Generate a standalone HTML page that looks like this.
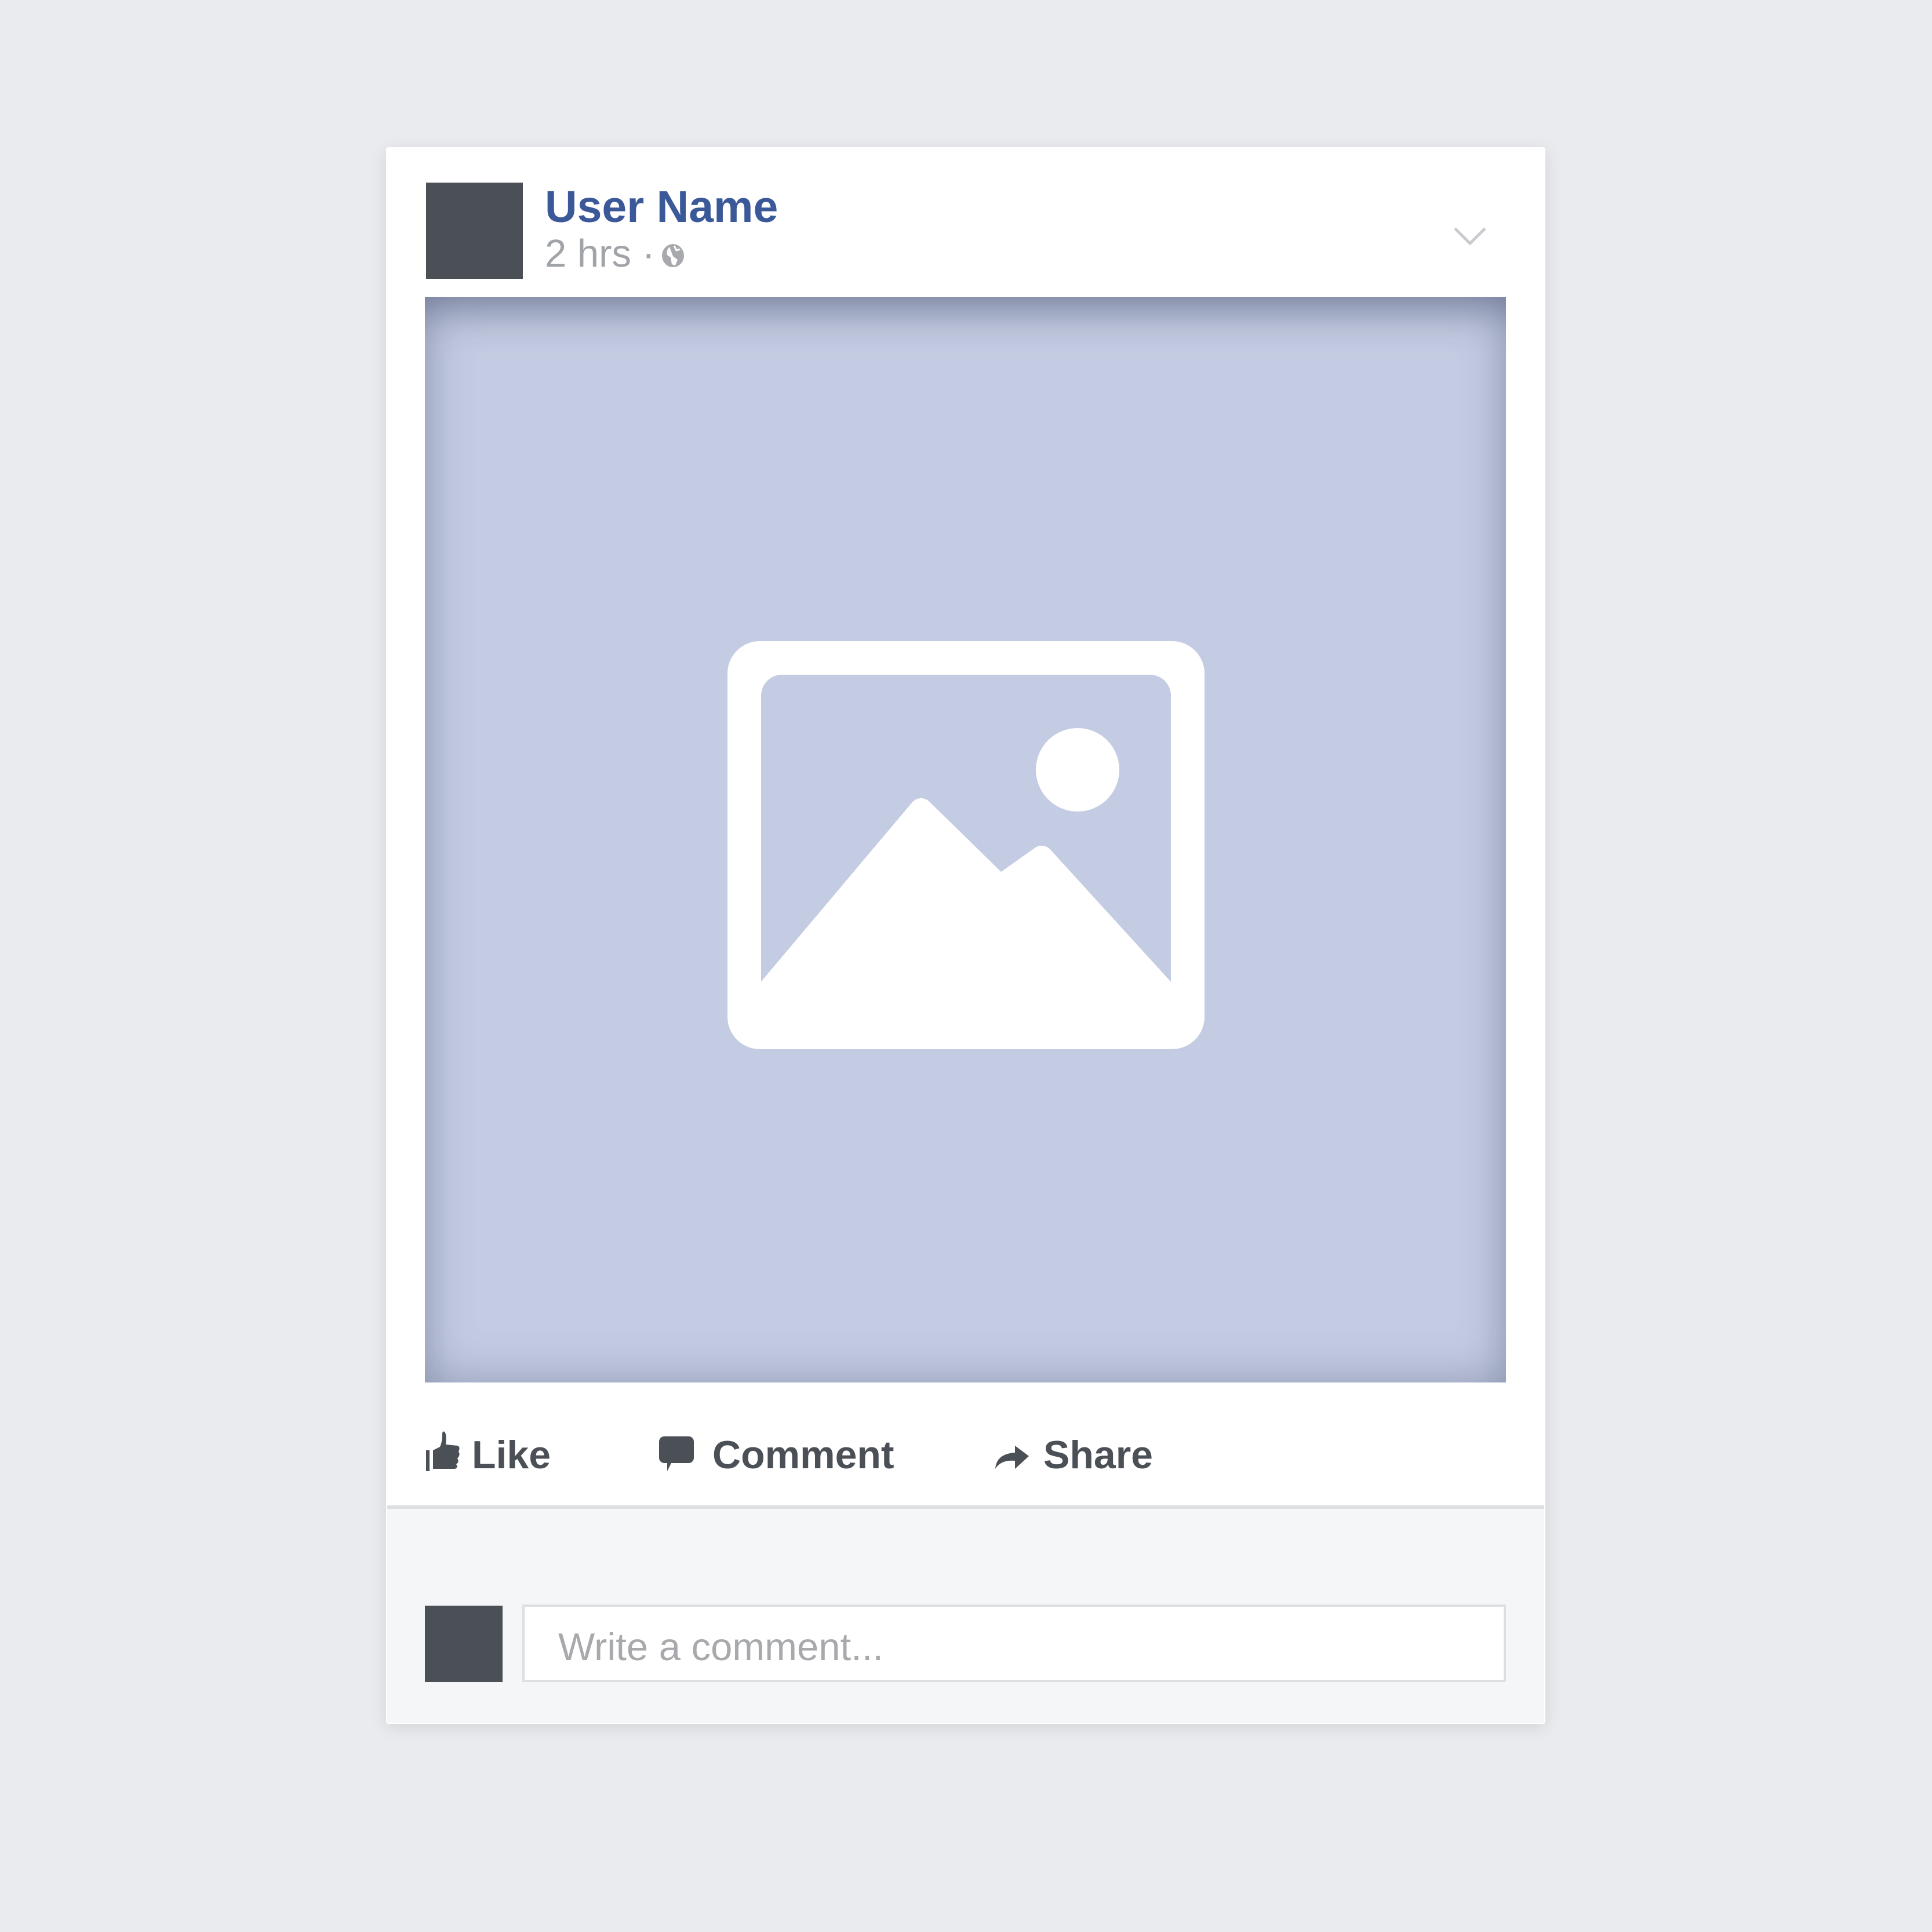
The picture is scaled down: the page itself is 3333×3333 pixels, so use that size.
<!DOCTYPE html>
<html><head><meta charset="utf-8"><style>
*{margin:0;padding:0;box-sizing:border-box}
body{width:3333px;height:3333px;background:#e9ebee;position:relative;overflow:hidden;font-family:"Liberation Sans",Arial,sans-serif}
.card{position:absolute;left:666px;top:254px;width:2000px;height:2720px;background:#fff;border-radius:4px;box-shadow:0 6px 30px rgba(0,0,0,0.10)}
.abs{position:absolute}
.img{position:absolute;left:733px;top:512px;width:1865px;height:1873px;background:#c4cce3;box-shadow:inset 0 60px 70px -40px rgba(70,80,110,0.45),inset 0 0 80px rgba(70,80,110,0.42);overflow:hidden}
.act{position:absolute;top:2470px;font-size:68px;font-weight:bold;color:#4b4f56;line-height:80px}
</style></head><body>
<div class="card"></div>
<div class="abs" style="left:735px;top:315px;width:167px;height:166px;background:#4b4f56"></div>
<div class="abs" style="left:940px;top:307px;font-size:77px;font-weight:bold;color:#3b5998;line-height:100px">User Name</div>
<div class="abs" style="left:940px;top:398px;font-size:67px;color:#a0a3a8;line-height:80px">2 hrs ·</div>
<svg class="abs" style="left:1141px;top:420px" width="40" height="42" viewBox="0 0 40 42"><ellipse cx="20" cy="21" rx="19" ry="20" fill="#a7a9ad"/><path d="M14 6 Q8 12 10 20 L16 24 L18 36 L24 38 L28 28 L20 22 Z" fill="#fff"/><path d="M22 4 L26 12 L32 10" stroke="#fff" stroke-width="3" fill="none"/></svg>
<svg class="abs" style="left:2506px;top:390px" width="60" height="36" viewBox="0 0 60 36"><path d="M4 4 L30 30 L56 4" stroke="#c8cbd0" stroke-width="5" fill="none"/></svg>
<div class="img">
<svg class="abs" style="left:0;top:0" width="1865" height="1873" viewBox="733 512 1865 1873">
<rect x="1255" y="1106" width="823" height="704" rx="56" fill="#fff"/>
<rect x="1313" y="1164" width="707" height="600" rx="36" fill="#c4cce3"/>
<circle cx="1859" cy="1328" r="72" fill="#fff"/>
<clipPath id="c"><rect x="1313" y="1164" width="707" height="640"/></clipPath>
<g clip-path="url(#c)">
<polygon points="1300,1740 1589,1397 1725,1530 1797,1479 2035,1740 2035,1800 1300,1800" fill="#fff" stroke="#fff" stroke-width="40" stroke-linejoin="round"/>
</g>
</svg>
</div>
<!-- actions -->
<svg class="abs" style="left:733px;top:2468px" width="62" height="72" viewBox="0 0 62 72"><rect x="2" y="34" width="6" height="36" fill="#4b4f56"/><path d="M14 34 L26 28 Q30 20 30 6 Q30 0 34 2 Q38 6 36 24 L56 26 Q62 28 58 36 Q62 42 56 48 Q60 54 54 58 Q58 64 52 66 L14 66 Z" fill="#4b4f56"/></svg>
<div class="act" style="left:814px">Like</div>
<svg class="abs" style="left:1137px;top:2478px" width="62" height="62" viewBox="0 0 62 62"><rect x="0" y="0" width="60" height="46" rx="9" fill="#4b4f56"/><path d="M14 44 L14 60 L22 44 Z" fill="#4b4f56"/></svg>
<div class="act" style="left:1229px">Comment</div>
<svg class="abs" style="left:1717px;top:2486px" width="60" height="50" viewBox="0 0 60 50"><path d="M0 48 Q2 22 34 20 L34 8 L58 26 L34 48 L34 34 Q10 32 0 48 Z" fill="#4b4f56"/></svg>
<div class="act" style="left:1800px">Share</div>
<div class="abs" style="left:668px;top:2597px;width:1996px;height:6px;background:#dddfe2"></div>
<div class="abs" style="left:668px;top:2603px;width:1996px;height:369px;background:#f5f6f7"></div>
<div class="abs" style="left:733px;top:2770px;width:134px;height:132px;background:#4b4f56"></div>
<div class="abs" style="left:901px;top:2768px;width:1697px;height:134px;background:#fff;border:4px solid #dddfe2"></div>
<div class="abs" style="left:963px;top:2802px;font-size:67px;color:#a7a9ac;line-height:80px">Write a comment...</div>
</body></html>
